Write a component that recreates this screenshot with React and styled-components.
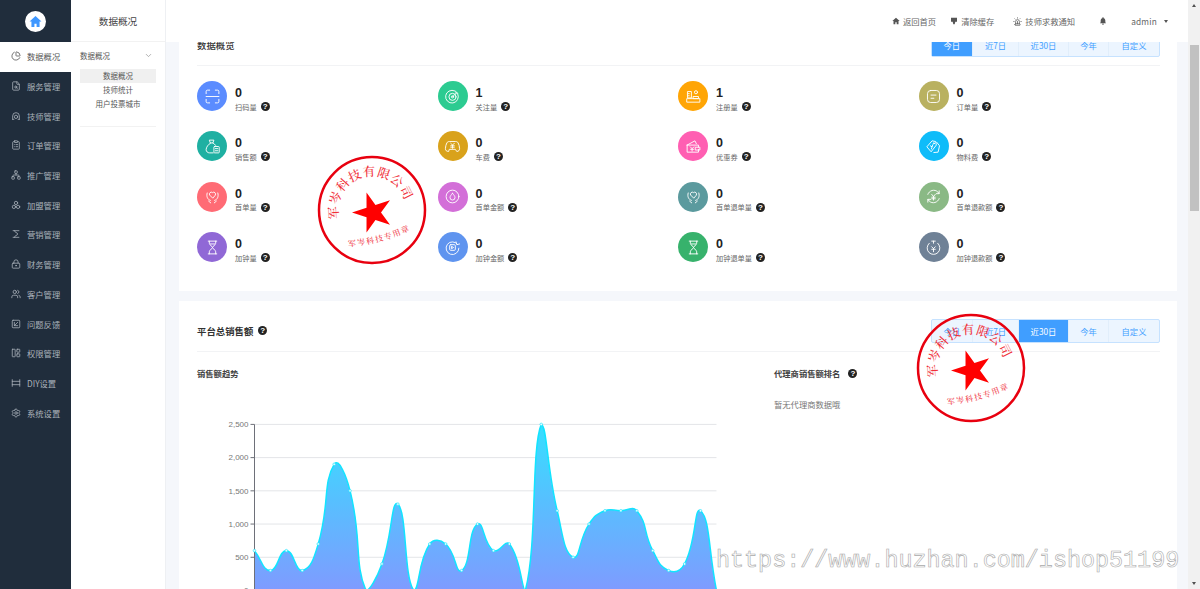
import React from 'react'
import styled, { createGlobalStyle } from 'styled-components'
import {
  ChartPie, FileSearch, ClipboardList, Network, LockKeyhole,
  Users, SquareArrowDownLeft, LayoutPanelLeft, Settings, ChevronDown, Siren,
} from 'lucide-react'

const GlobalStyle = createGlobalStyle`
  html, body { margin: 0; padding: 0; height: 100%; overflow: hidden; background: #fff; }
  body { font-family: "Noto Sans CJK SC", "Noto Sans", "Liberation Sans", sans-serif; }
  * { box-sizing: border-box; }
`

const Page = styled.div`
  position: relative;
  display: flex;
  width: 1200px;
  height: 589px;
  overflow: hidden;
`

const Sidebar = styled.aside`
  flex: 0 0 71px;
  background: #202d3c;
`
const Logo = styled.div`
  height: 42px;
  display: flex;
  align-items: center;
  justify-content: center;
`
const LogoCircle = styled.div`
  width: 21px;
  height: 21px;
  border-radius: 50%;
  background: #fff;
  display: flex;
  align-items: center;
  justify-content: center;
`
const NavItem = styled.div`
  height: 29.7px;
  display: flex;
  align-items: center;
  padding: 0 0 1px 11px;
  gap: 6px;
  font-size: 8.3px;
  white-space: nowrap;
  color: ${p => (p.$active ? '#555' : '#aab2ba')};
  background: ${p => (p.$active ? '#fff' : 'transparent')};
  svg { width: 10px; height: 10px; flex: none; stroke-width: 1.9; }
`

const SubNav = styled.nav`
  flex: 0 0 95px;
  background: #fff;
  border-right: 1px solid #eef0f3;
`
const SubTitle = styled.div`
  height: 42px;
  display: flex;
  align-items: center;
  justify-content: center;
  font-size: 9.6px;
  color: #444;
  border-bottom: 1px solid #f2f2f2;
`
const SubGroup = styled.div`
  margin: 0 9px;
  padding-bottom: 16px;
  border-bottom: 1px solid #f2f2f2;
`
const SubGroupHead = styled.div`
  height: 27px;
  display: flex;
  align-items: center;
  justify-content: space-between;
  padding-right: 3px;
  font-size: 7.5px;
  color: #555;
  svg { width: 9px; height: 9px; color: #999; }
`
const SubLink = styled.div`
  height: 13.8px;
  display: flex;
  align-items: center;
  justify-content: center;
  font-size: 7.5px;
  color: #555;
  background: ${p => (p.$active ? '#f0f0f0' : 'transparent')};
`

const Main = styled.main`
  flex: 1;
  min-width: 0;
  display: flex;
  flex-direction: column;
  background: #f5f7fb;
`
const Header = styled.header`
  flex: 0 0 42px;
  background: #fff;
  display: flex;
  align-items: center;
  justify-content: flex-end;
  padding-right: 20px;
  position: relative;
  z-index: 2;
`
const HeaderLink = styled.div`
  display: flex;
  align-items: center;
  gap: 3px;
  font-size: 8.3px;
  color: #666;
  margin-right: ${p => p.$gap}px;
  letter-spacing: ${p => (p.$spaced ? '0.2px' : '0')};
`
const HeaderIcon = styled.svg`
  width: 8px;
  height: 8px;
  fill: #555;
`
const Caret = styled.span`
  width: 0;
  height: 0;
  margin-left: 4px;
  border-left: 2.5px solid transparent;
  border-right: 2.5px solid transparent;
  border-top: 3px solid #555;
`
const Content = styled.div`
  flex: 1;
  overflow: hidden;
  padding: 0 11px 0 13px;
`
// the page is scrolled a little, so the first card starts under the header
const Card = styled.section`
  background: #fff;
  padding: ${p => p.$top}px 17px 0 18px;
  height: ${p => p.$height}px;
  margin-top: ${p => p.$scrolled || 0}px;
  margin-bottom: 10px;
`
const CardHead = styled.div`
  height: 33px;
  padding-bottom: 9px;
  display: flex;
  align-items: center;
  justify-content: space-between;
  border-bottom: 1px solid #f2f3f5;
`
const CardTitle = styled.h2`
  margin: 0;
  display: flex;
  align-items: center;
  gap: 5px;
  font-size: 9.4px;
  font-weight: ${p => (p.$strong ? 700 : 500)};
  color: #333;
`
const Tabs = styled.div`
  display: flex;
  height: 24px;
  border: 1px solid #c6e2ff;
  border-radius: 2px;
  background: #ecf5ff;
`
const Tab = styled.div`
  width: ${p => p.$w}px;
  display: flex;
  align-items: center;
  justify-content: center;
  font-size: 8.3px;
  color: ${p => (p.$active ? '#fff' : '#409eff')};
  background: ${p => (p.$active ? '#409eff' : 'transparent')};
  & + & { border-left: 1px solid #e1eefb; }
`

const StatGrid = styled.div`
  display: grid;
  grid-template-columns: repeat(4, 240.5px);
  grid-auto-rows: 50.4px;
  padding-top: 15px;
`
const Stat = styled.div`
  display: flex;
  gap: 8px;
`
const StatIcon = styled.div`
  width: 30px;
  height: 30px;
  flex: none;
  border-radius: 50%;
  background: ${p => p.$color};
  display: flex;
  align-items: center;
  justify-content: center;
`
const Glyph = styled.svg`
  width: 17px;
  height: 17px;
  fill: none;
  stroke: #fff;
  stroke-width: 1.3;
  stroke-linecap: round;
  stroke-linejoin: round;
`
const StatBody = styled.div`
  padding-top: 5px;
`
const StatValue = styled.div`
  font-family: "Liberation Sans", sans-serif;
  font-size: 12.5px;
  font-weight: 700;
  line-height: 14px;
  color: #222;
`
const StatLabel = styled.div`
  display: flex;
  align-items: center;
  gap: 4px;
  height: 13px;
  font-size: 7.2px;
  color: #666;
`
const Help = styled.span`
  width: 9px;
  height: 9px;
  flex: none;
  border-radius: 50%;
  background: #222;
  color: #fff;
  font-family: "Liberation Sans", sans-serif;
  font-size: 8px;
  font-weight: 700;
  line-height: 9.5px;
  text-align: center;
`

const Columns = styled.div`
  display: grid;
  grid-template-columns: 577px 1fr;
`
const ColumnTitle = styled.h3`
  margin: 0;
  height: 12px;
  margin-top: 15px;
  display: flex;
  align-items: center;
  gap: 8px;
  font-size: 8.3px;
  font-weight: 700;
  color: #444;
`
const EmptyNote = styled.p`
  margin: 19px 0 0;
  font-size: 8.3px;
  line-height: 12px;
  color: #777;
`
const ChartSvg = styled.svg`
  display: block;
  margin-top: 15px;
  width: 530px;
  height: 200px;
  overflow: hidden;
`

const Scrollbar = styled.div`
  flex: 0 0 12px;
  background: #f1f1f1;
  position: relative;
  z-index: 3;
  padding: 45px 1px 0 2px;
`
const ScrollThumb = styled.div`
  height: 166px;
  background: #c1c1c1;
`
const ScrollArrow = styled.span`
  position: absolute;
  left: 3.5px;
  width: 0;
  height: 0;
  border-left: 2.5px solid transparent;
  border-right: 2.5px solid transparent;
  ${p => (p.$down
    ? 'bottom: 4px; border-top: 3px solid #505050;'
    : 'top: 4px; border-bottom: 3px solid #505050;')}
`

const StampBox = styled.svg`
  position: absolute;
  left: ${p => p.$x - 55}px;
  top: ${p => p.$y - 55}px;
  width: 110px;
  height: 110px;
  z-index: 4;
  pointer-events: none;
`
const Watermark = styled.div`
  position: absolute;
  left: 716px;
  top: 546px;
  z-index: 5;
  font-family: "Liberation Mono", monospace;
  font-size: 23.4px;
  line-height: 30px;
  white-space: nowrap;
  color: rgba(255, 255, 255, 0.5);
  -webkit-text-stroke: 0.6px #a9a9a9;
`

const NavSvg = ({ d, children }) => (
  <svg viewBox="0 0 24 24" fill="none" stroke="currentColor" strokeLinecap="round" strokeLinejoin="round">
    {d ? <path d={d} /> : children}
  </svg>
)

const TechIcon = () => (
  <NavSvg>
    <path d="M4 20v-8a8 8 0 0 1 16 0v8" />
    <circle cx="12" cy="14" r="4" />
    <path d="M4 20h3M17 20h3" />
  </NavSvg>
)
const JoinIcon = () => (
  <NavSvg>
    <circle cx="12" cy="7" r="4" />
    <circle cx="7" cy="16.500" r="4" />
    <circle cx="17" cy="16.500" r="4" />
  </NavSvg>
)
const MarketIcon = () => <NavSvg d="M5 4h14M5 20h14M8 4c0 5 8 4 8 8s-8 3-8 8" />
const DiyIcon = () => <NavSvg d="M3 4v16M21 4v16M3 8h18M3 16h18" />

const NAV = [
  ['数据概况', ChartPie], ['服务管理', FileSearch], ['技师管理', TechIcon], ['订单管理', ClipboardList],
  ['推广管理', Network], ['加盟管理', JoinIcon], ['营销管理', MarketIcon], ['财务管理', LockKeyhole],
  ['客户管理', Users], ['问题反馈', SquareArrowDownLeft], ['权限管理', LayoutPanelLeft], ['DIY设置', DiyIcon],
  ['系统设置', Settings],
]

const yen = <path d="M9.500 9l2.500 3 2.500-3M12 12v5M9.500 13h5M9.500 15.200h5" />
const heartHands = (
  <>
    <path d="M12 14l-4-4a2.700 2.700 0 0 1 4-3.500 2.700 2.700 0 0 1 4 3.500z" />
    <path d="M4.500 7C3 12 5 16.500 9 17.500M19.500 7C21 12 19 16.500 15 17.500" />
    <path d="M6.500 18.500l3 2.500M17.500 18.500l-3 2.500" />
  </>
)
const hourglass = (
  <>
    <path d="M6 3h12M6 21h12" />
    <path d="M7.500 3v3c0 3 4.500 4 4.500 6s-4.500 3-4.500 6v3M16.500 3v3c0 3-4.500 4-4.500 6s4.500 3 4.500 6v3" />
    <path d="M9 7h6" />
  </>
)
const GLYPHS = {
  scan: <path d="M3 8V5a2 2 0 0 1 2-2h3M16 3h3a2 2 0 0 1 2 2v3M21 16v3a2 2 0 0 1-2 2h-3M8 21H5a2 2 0 0 1-2-2v-3M3 12h18" />,
  target: (
    <>
      <path d="M19.500 8.500a9 9 0 1 1-4.500-4.500" />
      <circle cx="12" cy="12.500" r="5" />
      <circle cx="12" cy="12.500" r="1.500" />
      <path d="M12 12.500l6-6M16.500 4.500l.5 2.500 2.500.5" />
    </>
  ),
  register: (
    <>
      <path d="M4 5h5v9H4zM4 8h2M4 11h2" />
      <circle cx="15.500" cy="6" r="2.200" />
      <path d="M12 12h7v3H12zM3 15h18v5H3z" />
    </>
  ),
  order: (
    <>
      <rect x="3.500" y="3.500" width="17" height="17" rx="4.500" />
      <path d="M8.500 10h7M8.500 14.500h4" />
    </>
  ),
  bag: (
    <>
      <path d="M8 3h6l-1.500 4h-3zM9.500 7C6 9 3 13 3 16.500 3 19 5 21 8 21h5" />
      <path d="M12.500 7c1.500.8 3 2 4 3.500" />
      <rect x="14" y="12" width="7.500" height="9" rx="1" />
      <path d="M16 15h3.500M16 18h3.500" />
    </>
  ),
  car: (
    <>
      <path d="M6 19c-2.500 0-4-1.500-4-4 0-3 1-6 2-8 .8-1.500 2-2 3.500-2h9c1.500 0 2.700.5 3.500 2 1 2 2 5 2 8 0 2.500-1.500 4-4 4l-2-3H8z" />
      <path d="M9.500 7.500L12 10l2.500-2.500M12 10v4.500M9.500 11h5M9.500 13h5" />
    </>
  ),
  wallet: (
    <>
      <path d="M3 10l11-6 2 4M3 10v10h16v-4M3 10h16v3" />
      <path d="M15 13h6v4h-6z" />
      <path d="M7.500 12.500L10 15l2.500-2.500M10 15v3.500M8 16h4" />
    </>
  ),
  tags: (
    <>
      <path d="M3 12l7-8 5 1 1 5-7 9z" />
      <path d="M16.500 6l4 5-2 9-6 .5" />
      <circle cx="12.500" cy="7.500" r=".8" />
      <path d="M7.500 11l2.500 1.500 1-3M10 12.500l-1 3" />
    </>
  ),
  heart: heartHands,
  drop: (
    <>
      <circle cx="12" cy="12" r="9" />
      <path d="M12 7.500c-2 2.500-3.500 4-3.500 6a3.500 3.500 0 0 0 7 0c0-2-1.500-3.500-3.500-6z" />
    </>
  ),
  refund: (
    <>
      <path d="M4 9a8.500 8.500 0 0 1 14-3.500L20 8M20 15a8.500 8.500 0 0 1-14 3.500L4 16" />
      <path d="M20 4v4h-4M4 20v-4h4" />
      {yen}
    </>
  ),
  hourglass,
  pay: (
    <>
      <path d="M19.500 8A9 9 0 1 0 21 13" />
      <path d="M17 4l1 4 4-1" />
      <rect x="8" y="8" width="8" height="8" rx="1.500" />
      <path d="M11 10.500l2.500 1.500-2.500 1.500z" />
    </>
  ),
  back: (
    <>
      <path d="M6 6a9 9 0 1 0 12 0" />
      <path d="M12 3v3M9.500 3h5" />
      <path d="M9.500 11l2.500 2.500 2.500-2.500M12 13.500V18M9.500 14.500h5" />
    </>
  ),
}

const STATS = [
  ['0', '扫码量', '#5b8cff', 'scan'], ['1', '关注量', '#2ccb91', 'target'], ['1', '注册量', '#ffa505', 'register'], ['0', '订单量', '#b9b160', 'order'],
  ['0', '销售额', '#1fb0a2', 'bag'], ['0', '车费', '#d9a21b', 'car'], ['0', '优惠券', '#ff5fb2', 'wallet'], ['0', '物料费', '#0fbcf9', 'tags'],
  ['0', '首单量', '#ff6b75', 'heart'], ['0', '首单金额', '#d36fd8', 'drop'], ['0', '首单退单量', '#5b9a9e', 'heart'], ['0', '首单退款额', '#8ab985', 'refund'],
  ['0', '加钟量', '#9068d6', 'hourglass'], ['0', '加钟金额', '#5f94ef', 'pay'], ['0', '加钟退单量', '#37b26c', 'hourglass'], ['0', '加钟退款额', '#6f8196', 'back'],
]

const TAB_WIDTHS = [40.5, 46, 50, 40, 51]
const TAB_NAMES = ['今日', '近7日', '近30日', '今年', '自定义']

const SALES = [600, 300, 600, 300, 700, 1900, 1500, 0, 400, 1300, 0, 700, 700, 300, 1000, 600, 700, 0, 2500, 1200, 500, 1000, 1200, 1200, 1200, 600, 300, 400, 1200, 0]

// chart coordinates, the svg starts at the left edge of the column
const AXIS_X = 57.5
const STEP = 15.93
const ZERO_Y = 196.5
const UNIT = 33.22 / 500
const pts = SALES.map((v, i) => [AXIS_X + i * STEP, ZERO_Y - v * UNIT])

function smoothLine(points, smooth = 0.5) {
  const topY = ZERO_Y - 2500 * UNIT
  const clampY = y => Math.min(ZERO_Y, Math.max(topY, y))
  let d = `M${points[0][0]},${points[0][1]}`
  const ctrl = points.map((p, i) => {
    const prev = points[i - 1] || p
    const next = points[i + 1] || p
    const vx = next[0] - prev[0]
    const vy = next[1] - prev[1]
    const d0 = Math.hypot(p[0] - prev[0], p[1] - prev[1])
    const d1 = Math.hypot(next[0] - p[0], next[1] - p[1])
    const r = d0 + d1 === 0 ? 0.5 : d1 / (d0 + d1)
    return {
      out: [p[0] + vx * smooth * r, clampY(p[1] + vy * smooth * r)],
      in: [p[0] - vx * smooth * (1 - r), clampY(p[1] - vy * smooth * (1 - r))],
    }
  })
  for (let i = 1; i < points.length; i++) {
    const a = ctrl[i - 1].out
    const b = ctrl[i].in
    d += `C${a[0]},${a[1]} ${b[0]},${b[1]} ${points[i][0]},${points[i][1]}`
  }
  return d
}

function SalesChart() {
  const line = smoothLine(pts)
  const right = pts[pts.length - 1][0]
  return (
    <ChartSvg viewBox="0 0 530 200">
      <defs>
        <linearGradient id="salesFill" x1="0" y1="0" x2="0" y2="1">
          <stop offset="0" stopColor="#35dfff" />
          <stop offset="1" stopColor="#7f9bff" />
        </linearGradient>
      </defs>
      {[0, 500, 1000, 1500, 2000, 2500].map(v => {
        const y = ZERO_Y - v * UNIT
        return (
          <g key={v}>
            <line x1={AXIS_X} x2={right} y1={y} y2={y} stroke="#e3e5e8" />
            <line x1={AXIS_X - 4} x2={AXIS_X} y1={y} y2={y} stroke="#6e7079" />
            <text x={AXIS_X - 6} y={y + 2.800} textAnchor="end" fontSize="8" fill="#777" fontFamily="Liberation Sans, sans-serif">
              {v.toLocaleString('en-US')}
            </text>
          </g>
        )
      })}
      <path d={`${line}L${right},${ZERO_Y}L${AXIS_X},${ZERO_Y}Z`} fill="url(#salesFill)" />
      <line x1={AXIS_X} x2={AXIS_X} y1={ZERO_Y - 2500 * UNIT} y2={ZERO_Y} stroke="#6e7079" />
      <path d={line} fill="none" stroke="#12e4ff" strokeWidth="1.500" />
      {pts.map(p => (
        <circle key={p[0]} cx={p[0]} cy={p[1]} r="1.300" fill="#eafcff" stroke="#12e4ff" strokeWidth=".6" />
      ))}
    </ChartSvg>
  )
}

function starPoints(R, r) {
  const out = []
  for (let i = 0; i < 10; i++) {
    const a = (Math.PI / 180) * (180 + i * 36)
    const len = i % 2 ? r : R
    out.push(`${(len * Math.cos(a)).toFixed(2)},${(len * Math.sin(a)).toFixed(2)}`)
  }
  return out.join(' ')
}

function Stamp({ x, y, id }) {
  const serif = '"Noto Serif CJK SC", "Liberation Serif", "Noto Sans CJK SC", serif'
  return (
    <StampBox $x={x} $y={y} viewBox="-55 -55 110 110">
      <circle r="53" fill="none" stroke="#e8000f" strokeWidth="2.500" />
      <defs>
        <path id={`${id}-top`} d="M-34,0 A34,34 0 0 1 34,0 A34,34 0 0 1 -34,0" transform="rotate(-15)" />
        <path id={`${id}-bottom`} d="M-38,28 Q0,37 38,28" transform="rotate(-15)" />
      </defs>
      <polygon points={starPoints(21, 8)} transform="translate(1,2.500)" fill="#f00" />
      <text fontSize="12.500" fontWeight="500" fill="#f0303a" fontFamily={serif} letterSpacing="0.800" textAnchor="middle">
        <textPath href={`#${id}-top`} startOffset="25%">军岑科技有限公司</textPath>
      </text>
      <text fontSize="8" fontWeight="500" fill="#f0404a" fontFamily={serif} letterSpacing="1.300" textAnchor="middle">
        <textPath href={`#${id}-bottom`} startOffset="50%">军岑科技专用章</textPath>
      </text>
    </StampBox>
  )
}

function TabBar({ active }) {
  return (
    <Tabs>
      {TAB_NAMES.map((name, i) => (
        <Tab key={name} $w={TAB_WIDTHS[i]} $active={i === active}>{name}</Tab>
      ))}
    </Tabs>
  )
}

const HelpMark = () => <Help>?</Help>

export default function App() {
  return (
    <Page>
      <GlobalStyle />
      <Sidebar>
        <Logo>
          <LogoCircle>
            <svg width="13" height="13" viewBox="0 0 24 24" fill="#3e97ff">
              <path d="M12 2L1 12h3.500v10h5.500v-6h4v6h5.500V12H23z" />
            </svg>
          </LogoCircle>
        </Logo>
        {NAV.map(([name, Icon], i) => (
          <NavItem key={name} $active={i === 0}>
            <Icon />
            {name}
          </NavItem>
        ))}
      </Sidebar>

      <SubNav>
        <SubTitle>数据概况</SubTitle>
        <SubGroup>
          <SubGroupHead>数据概况<ChevronDown /></SubGroupHead>
          <SubLink $active>数据概况</SubLink>
          <SubLink>技师统计</SubLink>
          <SubLink>用户投票城市</SubLink>
        </SubGroup>
      </SubNav>

      <Main>
        <Header>
          <HeaderLink $gap={14}>
            <HeaderIcon viewBox="0 0 24 24"><path d="M12 2L1 12h3.500v10h5.500v-6h4v6h5.500V12H23z" /></HeaderIcon>
            返回首页
          </HeaderLink>
          <HeaderLink $gap={19}>
            <HeaderIcon viewBox="0 0 24 24"><path d="M3 2h18v12h-5l-2 8h-4l-2-8H3z" /></HeaderIcon>
            清除缓存
          </HeaderLink>
          <HeaderLink $gap={24}>
            <Siren size={9} color="#555" />
            技师求救通知
          </HeaderLink>
          <HeaderLink $gap={24}>
            <HeaderIcon viewBox="0 0 24 24"><path d="M12 1a2 2 0 0 0-2 2.500C6.500 4.500 5 7.500 5 11v5l-2 3h18l-2-3v-5c0-3.500-1.500-6.500-5-7.500A2 2 0 0 0 12 1zM9 20.500a3 3 0 0 0 6 0z" /></HeaderIcon>
          </HeaderLink>
          <HeaderLink $gap={0} $spaced>admin<Caret /></HeaderLink>
        </Header>

        <Content>
          <Card $top={0} $height={258} $scrolled={-9}>
            <CardHead>
              <CardTitle>数据概览</CardTitle>
              <TabBar active={0} />
            </CardHead>
            <StatGrid>
              {STATS.map(([value, label, color, glyph]) => (
                <Stat key={label}>
                  <StatIcon $color={color}>
                    <Glyph viewBox="0 0 24 24">{GLYPHS[glyph]}</Glyph>
                  </StatIcon>
                  <StatBody>
                    <StatValue>{value}</StatValue>
                    <StatLabel>{label}<HelpMark /></StatLabel>
                  </StatBody>
                </Stat>
              ))}
            </StatGrid>
          </Card>

          <Card $top={18} $height={400}>
            <CardHead>
              <CardTitle $strong>平台总销售额<HelpMark /></CardTitle>
              <TabBar active={2} />
            </CardHead>
            <Columns>
              <div>
                <ColumnTitle>销售额趋势</ColumnTitle>
                <SalesChart />
              </div>
              <div>
                <ColumnTitle>代理商销售额排名<HelpMark /></ColumnTitle>
                <EmptyNote>暂无代理商数据哦</EmptyNote>
              </div>
            </Columns>
          </Card>
        </Content>
      </Main>

      <Scrollbar>
        <ScrollArrow />
        <ScrollThumb />
        <ScrollArrow $down />
      </Scrollbar>

      <Stamp x={372} y={209.500} id="stampA" />
      <Stamp x={971} y={368} id="stampB" />
      <Watermark>https://www.huzhan.com/ishop51199</Watermark>
    </Page>
  )
}
